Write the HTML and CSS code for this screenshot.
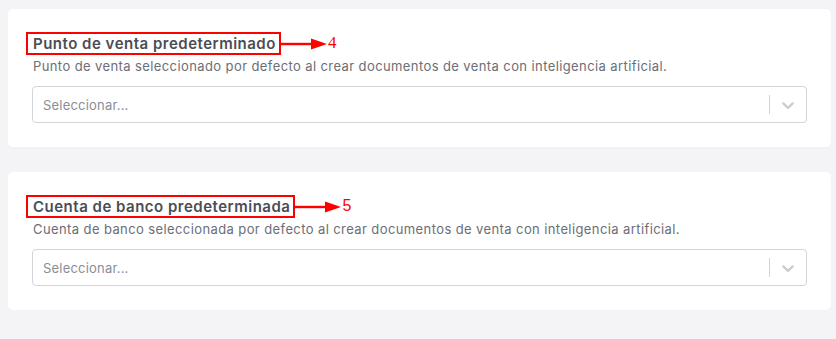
FILE: index.html
```html
<!DOCTYPE html>
<html lang="es">
<head>
    <meta charset="UTF-8">
    <meta name="viewport" content="width=device-width, initial-scale=1.0">
    <title>Preferencias de venta</title>
    <link rel="stylesheet" href="styles.css">
</head>
<body>
    <div class="settings">
        <div class="card">
            <h3 class="field-title">
                <span class="mark">Punto de venta predeterminado
                    <span class="arrow">
                        <svg width="46" height="12" viewBox="0 0 46 12"><path d="M0 6H31" stroke="#f00" stroke-width="2.4"/><path d="M30 0.5L46 6L30 11.5Z" fill="#f00"/></svg>
                        <span class="num num-serif">4</span>
                    </span>
                </span>
            </h3>
            <p class="field-help">Punto de venta seleccionado por defecto al crear documentos de venta con inteligencia artificial.</p>
            <div class="select">
                <span class="placeholder">Seleccionar...</span>
                <span class="indicators">
                    <span class="separator"></span>
                    <svg class="chevron" width="20" height="20" viewBox="0 0 20 20"><path d="M4.516 7.548c0.436-0.446 1.043-0.481 1.576 0l3.908 3.747 3.908-3.747c0.533-0.481 1.141-0.446 1.574 0 0.436 0.445 0.408 1.197 0 1.615-0.406 0.418-4.695 4.502-4.695 4.502-0.217 0.223-0.502 0.335-0.787 0.335s-0.57-0.112-0.789-0.335c0 0-4.287-4.084-4.695-4.502s-0.436-1.170 0-1.615z" fill="#ccc"/></svg>
                </span>
            </div>
        </div>

        <div class="card">
            <h3 class="field-title">
                <span class="mark">Cuenta de banco predeterminada
                    <span class="arrow">
                        <svg width="46" height="12" viewBox="0 0 46 12"><path d="M0 6H31" stroke="#f00" stroke-width="2.4"/><path d="M30 0.5L46 6L30 11.5Z" fill="#f00"/></svg>
                        <span class="num">5</span>
                    </span>
                </span>
            </h3>
            <p class="field-help">Cuenta de banco seleccionada por defecto al crear documentos de venta con inteligencia artificial.</p>
            <div class="select">
                <span class="placeholder">Seleccionar...</span>
                <span class="indicators">
                    <span class="separator"></span>
                    <svg class="chevron" width="20" height="20" viewBox="0 0 20 20"><path d="M4.516 7.548c0.436-0.446 1.043-0.481 1.576 0l3.908 3.747 3.908-3.747c0.533-0.481 1.141-0.446 1.574 0 0.436 0.445 0.408 1.197 0 1.615-0.406 0.418-4.695 4.502-4.695 4.502-0.217 0.223-0.502 0.335-0.787 0.335s-0.57-0.112-0.789-0.335c0 0-4.287-4.084-4.695-4.502s-0.436-1.170 0-1.615z" fill="#ccc"/></svg>
                </span>
            </div>
        </div>
    </div>
</body>
</html>
```

FILE: styles.css
```css
body {
    margin: 0;
    padding: 9px 5px 0 8px;
    font-family: Inter, "Noto Sans", sans-serif;
    background-color: #f4f4f7;
}
.settings {
    display: flex;
    flex-direction: column;
    gap: 25px;
}
.card {
    background: white;
    border-radius: 5px;
    padding: 24px;
    box-shadow: 0px 1px 3px rgba(0, 0, 0, 0.02);
}
.field-title {
    margin: 0;
    font-size: 15px;
    font-weight: 600;
    line-height: 22px;
    letter-spacing: 0.5px;
    color: #4a4d55;
    padding-left: 1px;
}
.mark {
    position: relative;
    display: inline-block;
}
.mark::before {
    content: "";
    position: absolute;
    top: -1px;
    bottom: 0;
    left: -7px;
    right: -5px;
    border: 2px solid #f00;
}
.arrow {
    position: absolute;
    left: 100%;
    top: 0;
    margin-left: 5px;
    display: flex;
    align-items: center;
    height: 22px;
    letter-spacing: 0;
}
.arrow svg {
    display: block;
}
.num {
    font-family: "Liberation Sans", sans-serif;
    font-weight: normal;
    font-size: 16px;
    color: #f00;
    margin-left: 1px;
    margin-top: -3px;
}
.num-serif {
    font-family: "Liberation Serif", serif;
    font-size: 17px;
}
.field-help {
    margin: 1px 0 10px 1px;
    font-size: 13px;
    line-height: 20px;
    letter-spacing: 0.4px;
    color: #6b6e76;
}
.select {
    display: flex;
    align-items: center;
    height: 37px;
    box-sizing: border-box;
    border: 1px solid #d3d5db;
    border-radius: 4px;
    padding-left: 10px;
}
.placeholder {
    flex: 1;
    font-size: 13px;
    letter-spacing: 0.2px;
    color: #8a8d98;
}
.indicators {
    display: flex;
    align-items: center;
}
.separator {
    width: 1px;
    height: 19px;
    background: #d3d3d3;
}
.chevron {
    margin: 0 8px;
}
```
